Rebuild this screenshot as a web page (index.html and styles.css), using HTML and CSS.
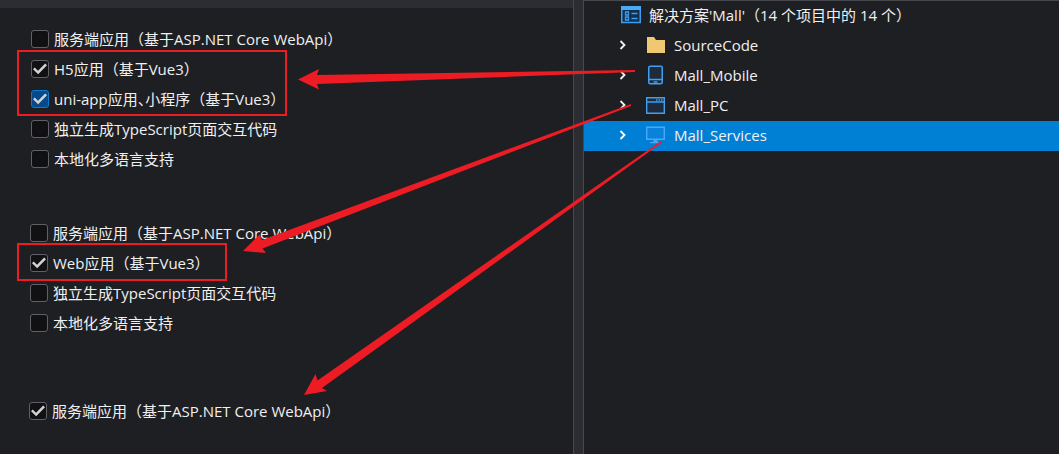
FILE: index.html
```html
<!DOCTYPE html>
<html lang="zh-CN">
<head>
<meta charset="utf-8">
<title>Mall</title>
<link rel="stylesheet" href="styles.css">
</head>
<body>
<main class="workspace">
  <section class="options">
    <div class="options-bar"></div>
    <form class="groups">
      <div class="group">
        <label class="option"><input type="checkbox"><span>服务端应用（基于ASP.NET Core WebApi）</span></label>
        <label class="option"><input type="checkbox" checked><span>H5应用（基于Vue3）</span></label>
        <label class="option active"><input type="checkbox" checked><span>uni-app应用<span class="half">、</span>小程序（基于Vue3）</span></label>
        <label class="option"><input type="checkbox"><span>独立生成TypeScript页面交互代码</span></label>
        <label class="option"><input type="checkbox"><span>本地化多语言支持</span></label>
      </div>
      <div class="group web">
        <label class="option"><input type="checkbox"><span>服务端应用（基于ASP.NET Core WebApi）</span></label>
        <label class="option"><input type="checkbox" checked><span>Web应用（基于Vue3）</span></label>
        <label class="option"><input type="checkbox"><span>独立生成TypeScript页面交互代码</span></label>
        <label class="option"><input type="checkbox"><span>本地化多语言支持</span></label>
      </div>
      <div class="group service">
        <label class="option"><input type="checkbox" checked><span>服务端应用（基于ASP.NET Core WebApi）</span></label>
      </div>
    </form>
  </section>
  <div class="splitter"></div>
  <section class="explorer">
    <div class="solution">
      <svg class="solution-icon" width="20" height="18" viewBox="0 0 20 18"><path d="M.75 1h18.5v15.5H.75z" fill="#12304d" stroke="#3d9df2" stroke-width="1.5"/><path d="M0 0h20v4H0z" fill="#4aa8f8"/><path d="M4.500 6h3v3h-3zM4.500 11h3v3h-3z" fill="none" stroke="#3d9df2" stroke-width="1.3"/><path d="M10.500 7.500h6M10.500 12.500h6" stroke="#3d9df2" stroke-width="1.5"/></svg>
      <span>解决方案'Mall'（14 个项目中的 14 个）</span>
    </div>
    <ul class="tree">
      <li class="node">
        <button class="toggle" type="button" aria-label="展开"><svg width="8" height="10" viewBox="0 0 8 10"><path d="M1.500 1l4 4-4 4" fill="none" stroke="#f2f2f2" stroke-width="1.800"/></svg></button>
        <svg class="icon" width="20" height="20" viewBox="0 0 20 20"><path d="M1 2h7l2 3h9v13H1z" fill="#efc874"/></svg>
        <span>SourceCode</span>
      </li>
      <li class="node">
        <button class="toggle" type="button" aria-label="展开"><svg width="8" height="10" viewBox="0 0 8 10"><path d="M1.500 1l4 4-4 4" fill="none" stroke="#f2f2f2" stroke-width="1.800"/></svg></button>
        <svg class="icon" width="20" height="20" viewBox="0 0 20 20"><rect x="2.750" y="1.200" width="13.500" height="17.600" rx="1.500" fill="#1d2b3b" stroke="#3f9ff2" stroke-width="1.500"/><path d="M3 14.500h13M7.500 17h4" stroke="#3f9ff2" stroke-width="1.300"/></svg>
        <span>Mall_Mobile</span>
      </li>
      <li class="node">
        <button class="toggle" type="button" aria-label="展开"><svg width="8" height="10" viewBox="0 0 8 10"><path d="M1.500 1l4 4-4 4" fill="none" stroke="#f2f2f2" stroke-width="1.800"/></svg></button>
        <svg class="icon" width="20" height="20" viewBox="0 0 20 20"><path d="M.7 2.700h17.600v15.600H.7zM.7 7h17.600" fill="#1d2b3b" stroke="#3f9ff2" stroke-width="1.400"/><path d="M10 5h1.500M12.500 5H14M15 5h1.500" stroke="#3f9ff2" stroke-width="1.500"/></svg>
        <span>Mall_PC</span>
      </li>
      <li class="node selected">
        <button class="toggle" type="button" aria-label="展开"><svg width="8" height="10" viewBox="0 0 8 10"><path d="M1.500 1l4 4-4 4" fill="none" stroke="#fff" stroke-width="1.800"/></svg></button>
        <svg class="icon" width="20" height="20" viewBox="0 0 20 20"><path d="M.7 2.200h17.600v12H.7z" fill="#0b82da" stroke="#46a8f8" stroke-width="1.400"/><path d="M7.500 14.500h4V17h3.500v1.300H4V17h3.500z" fill="#46a8f8"/></svg>
        <span>Mall_Services</span>
      </li>
    </ul>
  </section>
  <svg class="annotations" viewBox="0 0 1059 454" preserveAspectRatio="xMinYMin meet" aria-hidden="true">
    <g class="watermark">
      <text transform="translate(541 453) rotate(-19)">8166gaochengfeng</text>
      <text transform="translate(490 315) rotate(-19)">8166gaochengfeng</text>
      <text transform="translate(992 289) rotate(-19)">8166</text>
      <text transform="translate(1043 428) rotate(-19)">8</text>
      <text transform="translate(440 175) rotate(-19)">8166gaochengfeng</text>
      <text transform="translate(941 149) rotate(-19)">8166gao</text>
      <text transform="translate(86 391) rotate(-19)">8166gaochengfeng</text>
      <text transform="translate(86 227) rotate(-19)">8166gaochengfeng</text>
      <text transform="translate(34 92) rotate(-19)">8166gao</text>
      <text transform="translate(34 256) rotate(-19)">8166gao</text>
      <text transform="translate(34 436) rotate(-19)">8166gao</text>
    </g>
    <g class="frames">
      <path d="M18 51h268v64H18zM18 244h208v36H18z"/>
    </g>
    <g class="arrows">
      <path d="M298 79.500L319 69l-2 6L635 70v2L317 84l2 5.500z"/>
      <path d="M243 251l16.500-16.500L262 240 631 104v2L262.500 248.500l3.500 4.500z"/>
      <path d="M304 395l11.500-21 2 6.500L661 141l1 1.500L322 388l5 3z"/>
    </g>
  </svg>
</main>
</body>
</html>
```
FILE: styles.css
```css
* {
  box-sizing: border-box;
}

body {
  margin: 0;
  background: #1e1f23;
  color: #f0f0f0;
  font: 15px/30px "Open Sans", "Noto Sans CJK SC", sans-serif;
}

.workspace {
  position: relative;
  display: flex;
  min-height: 100vh;
  overflow: hidden;
}

.options {
  flex: 573 1 0;
  min-width: 0;
}

.options-bar {
  height: 8px;
  background: #2c2d32;
}

.groups {
  padding: 16px 0 28px;
}

.group {
  display: flex;
  flex-direction: column;
  align-items: flex-start;
  padding-left: 31px;
}

.group.web {
  margin-top: 44px;
  padding-left: 30px;
}

.group.service {
  margin-top: 58px;
  padding-left: 29px;
}

.option {
  display: flex;
  align-items: center;
  gap: 5px;
  height: 30px;
  white-space: nowrap;
}

.half {
  font-feature-settings: "halt";
}

.option input {
  appearance: none;
  display: grid;
  place-items: center;
  width: 18px;
  height: 18px;
  margin: 0;
  border: 1px solid #606166;
  border-radius: 3px;
  background: #111114;
}

.option input:checked::before {
  content: "";
  width: 14px;
  height: 12px;
  background: #d2d2d2;
  clip-path: polygon(0 52%, 12% 37%, 36% 64%, 87% 4%, 100% 18%, 37% 94%);
}

.option.active input {
  border-color: #0a7bd0;
  background: #07498a;
}

.splitter {
  width: 11px;
  border: solid #47484d;
  border-width: 0 1px;
  background: #2c2d32;
}

.explorer {
  flex: 475 1 0;
  min-width: 0;
  border-top: 1px solid #47484d;
}

.solution,
.node {
  display: flex;
  align-items: center;
  height: 30px;
  padding-bottom: 2px;
  line-height: 28px;
  white-space: nowrap;
}

.solution {
  gap: 8px;
  padding-left: 37px;
}

.tree {
  margin: 0;
  padding: 0;
  list-style: none;
}

.node {
  padding-left: 35px;
}

.node.selected {
  background: #0080d4;
}

.toggle {
  display: flex;
  width: 27px;
  padding: 0;
  border: 0;
  background: none;
}

.icon {
  margin-right: 8px;
}

.annotations {
  position: absolute;
  top: 0;
  left: 0;
  width: 100%;
  pointer-events: none;
}

.watermark {
  fill: #ffffff;
  fill-opacity: 0.02;
  font-family: "Open Sans", sans-serif;
  font-size: 40px;
}

.frames {
  fill: none;
  stroke: #ed1c24;
  stroke-width: 2px;
}

.arrows {
  fill: #ed1c24;
}
```
